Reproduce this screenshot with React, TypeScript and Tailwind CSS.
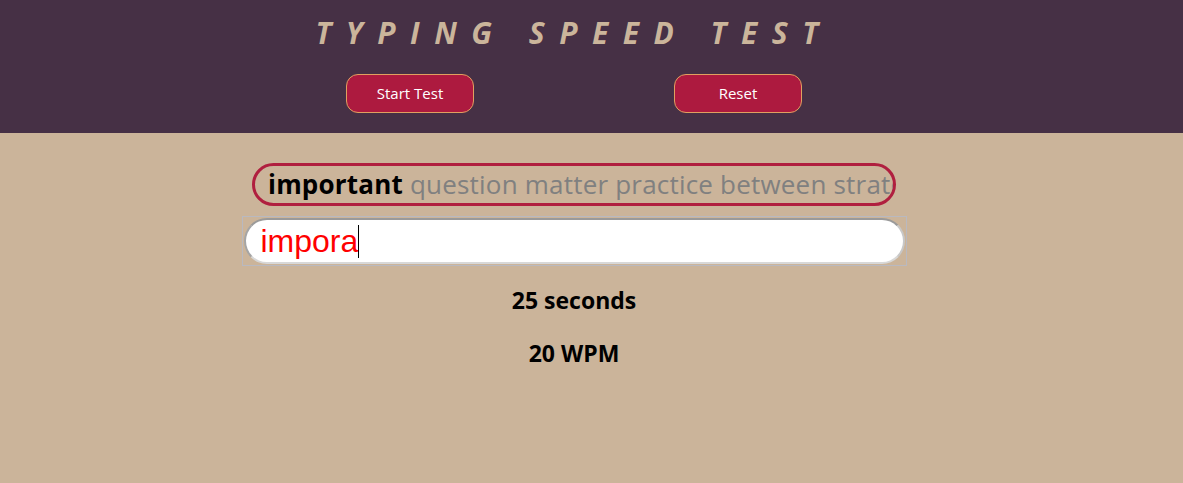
export default function App() {
  return (
    <div className="min-h-[483px] bg-[#cbb49a] font-['Open_Sans','Noto_Sans',sans-serif]">
      <header className="bg-[#463045] h-[133px]">
        <div className="w-[1148px] flex flex-col items-center pt-[13px]">
          <h1 className="text-[30px] leading-[40px] font-bold italic tracking-[14.5px] text-[#cbb59b]">
            TYPING SPEED TEST
          </h1>
          <div className="flex gap-[200px] mt-[21px]">
            <button className="w-[128px] h-[39px] rounded-[12px] bg-[#ad1a3f] border border-[#e0a060] text-white text-[15px]">
              Start Test
            </button>
            <button className="w-[128px] h-[39px] rounded-[12px] bg-[#ad1a3f] border border-[#e0a060] text-white text-[15px]">
              Reset
            </button>
          </div>
        </div>
      </header>

      <main className="w-[1148px] flex flex-col items-center pt-[30px]">
        {/* word strip */}
        <div className="w-[644px] h-[43px] rounded-full border-[3px] border-[#b01f3f] overflow-hidden whitespace-nowrap pl-[13px] text-[26px] leading-[37px] tracking-[0.2px]">
          <span className="font-bold text-black">important</span>{" "}
          <span className="text-[#808080]">question matter practice between strategy</span>
        </div>

        {/* input */}
        <div className="mt-[10px] p-px border border-[#b9b9c0]">
          <div className="w-[661px] h-[46px] rounded-full bg-white border-2 border-t-[#9a9a9a] border-l-[#a5a5a5] border-r-[#c8c8c8] border-b-[#d8d8d8] flex items-center pl-[15px]">
            <span className="text-[32px] leading-[38px] text-[#ff0000] font-['Liberation_Sans',sans-serif]">impora</span>
            <span className="w-px h-[33px] bg-black" />
          </div>
        </div>

        <div className="mt-[18px] text-[23px] font-bold text-black leading-[32px]">25 seconds</div>
        <div className="mt-[21px] text-[23px] font-bold text-black leading-[32px]">20 WPM</div>
      </main>
    </div>
  );
}
